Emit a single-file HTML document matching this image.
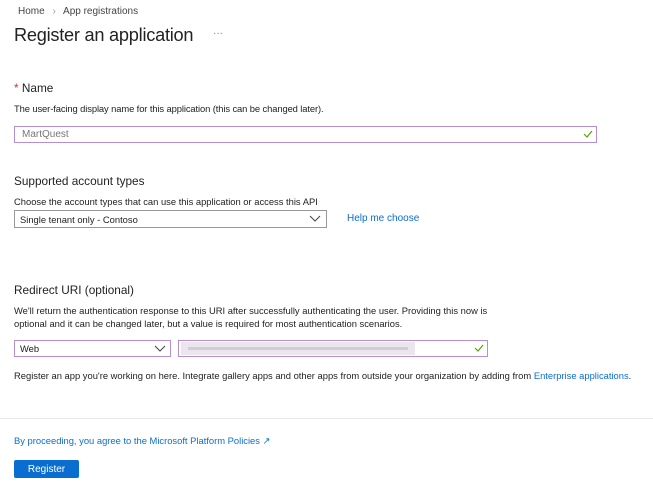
<!DOCTYPE html>
<html><head><meta charset="utf-8"><style>
body{margin:0;width:653px;height:487px;background:#fff;font-family:"Liberation Sans",sans-serif;color:#222;position:relative;overflow:hidden}
.a{position:absolute;white-space:nowrap}
.s{font-size:9.4px;letter-spacing:0}
.h{font-size:11.8px;letter-spacing:0}
.box{position:absolute;border:1px solid #b88fcc;background:#fff;box-sizing:border-box}
.blue{color:#0a6ed1}
</style></head><body>
<div class="a" style="left:18px;top:6px;font-size:10px;color:#444">Home <span style="color:#999;margin:0 5px">›</span> App registrations</div>
<div class="a" style="left:14px;top:25px;font-size:18.2px;color:#222;letter-spacing:-0.25px">Register an application</div>
<div class="a" style="left:213px;top:28px;font-size:10px;color:#777">···</div>
<div class="a h" style="left:14px;top:81px"><span style="color:#d13438">*</span> Name</div>
<div class="a s" style="left:14px;top:103px;letter-spacing:-0.1px">The user-facing display name for this application (this can be changed later).</div>
<div class="box" style="left:14px;top:126px;width:583px;height:17px"></div>
<div class="a" style="left:22px;top:129px;font-size:10px;color:#777">MartQuest</div>
<svg class="a" style="left:583px;top:129px" width="10" height="10"><path d="M1 5l3 3 5-6" stroke="#57a300" stroke-width="1.2" fill="none"/></svg>
<div class="a h" style="left:14px;top:174px">Supported account types</div>
<div class="a s" style="left:14px;top:196px">Choose the account types that can use this application or access this API</div>
<div class="box" style="left:14px;top:210px;width:313px;height:18px;border-color:#999"></div>
<div class="a s" style="left:20px;top:214px">Single tenant only - Contoso</div>
<svg class="a" style="left:309px;top:214px" width="12" height="9"><path d="M1 2l5 5 5-5" stroke="#444" stroke-width="1" fill="none"/></svg>
<div class="a blue" style="left:347px;top:213px;font-size:10px">Help me choose</div>
<div class="a h" style="left:14px;top:283px">Redirect URI (optional)</div>
<div class="a s" style="left:14px;top:305px">We'll return the authentication response to this URI after successfully authenticating the user. Providing this now is</div>
<div class="a s" style="left:14px;top:318px">optional and it can be changed later, but a value is required for most authentication scenarios.</div>
<div class="box" style="left:14px;top:340px;width:157px;height:17px"></div>
<div class="a s" style="left:20px;top:343px">Web</div>
<svg class="a" style="left:154px;top:344px" width="12" height="9"><path d="M1 2l5 5 5-5" stroke="#444" stroke-width="1" fill="none"/></svg>
<div class="box" style="left:178px;top:340px;width:310px;height:17px"></div>
<div class="a" style="left:181px;top:342px;width:234px;height:13px;background:#ebe6ee"></div>
<div class="a" style="left:188px;top:347px;width:220px;height:3px;background:#d2ccd5"></div>
<svg class="a" style="left:474px;top:343px" width="10" height="10"><path d="M1 5l3 3 5-6" stroke="#57a300" stroke-width="1.2" fill="none"/></svg>
<div class="a s" style="left:14px;top:370px">Register an app you're working on here. Integrate gallery apps and other apps from outside your organization by adding from <span class="blue">Enterprise applications</span>.</div>
<div class="a" style="left:0;top:418px;width:653px;height:1px;background:#e8e8e8"></div>
<div class="a s blue" style="left:14px;top:435px">By proceeding, you agree to the Microsoft Platform Policies ↗</div>
<div class="a" style="left:14px;top:460px;width:65px;height:18px;background:#0a6ed1;border-radius:2px;color:#fff;font-size:10px;text-align:center;line-height:19px">Register</div>
</body></html>
